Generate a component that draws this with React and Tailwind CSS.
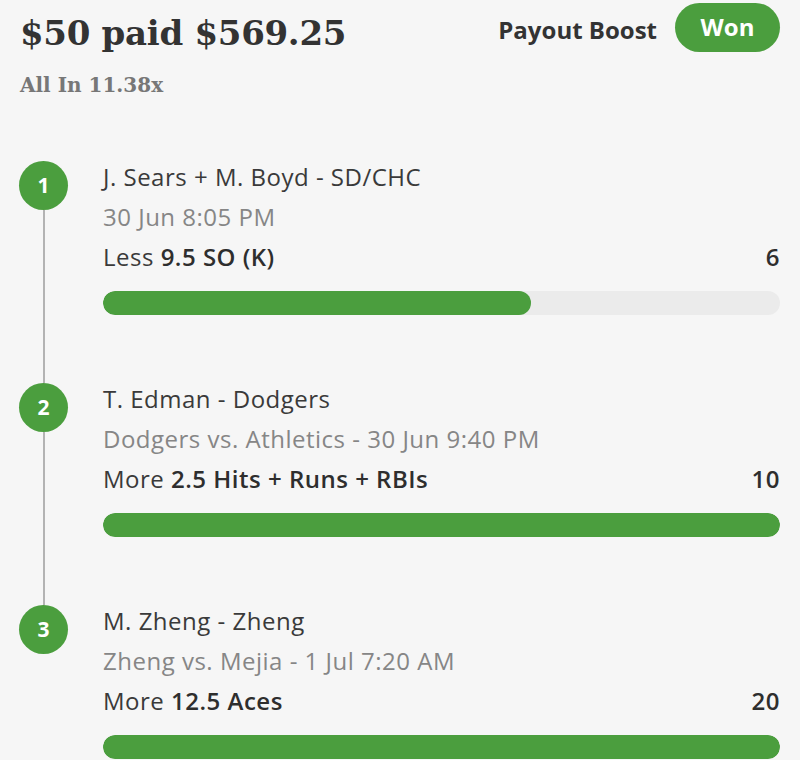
import React from "react";

const legs = [
  {
    n: 1,
    title: "J. Sears + M. Boyd - SD/CHC",
    sub: "30 Jun 8:05 PM",
    dir: "Less",
    line: "9.5 SO (K)",
    value: 6,
    pct: 63.2,
  },
  {
    n: 2,
    title: "T. Edman - Dodgers",
    sub: "Dodgers vs. Athletics - 30 Jun 9:40 PM",
    dir: "More",
    line: "2.5 Hits + Runs + RBIs",
    value: 10,
    pct: 100,
  },
  {
    n: 3,
    title: "M. Zheng - Zheng",
    sub: "Zheng vs. Mejia - 1 Jul 7:20 AM",
    dir: "More",
    line: "12.5 Aces",
    value: 20,
    pct: 100,
  },
];

function Leg({ leg, last }) {
  return (
    <div className={`flex ${last ? "" : "h-[222px]"}`}>
      <div className="w-[87px] flex flex-col items-center shrink-0">
        <div className="w-[49px] h-[49px] rounded-full bg-[#4b9e3e] text-white flex items-center justify-center text-[21px] font-bold shrink-0">
          {leg.n}
        </div>
        {!last && <div className="w-[2px] flex-1 bg-[#b3b3b3]" />}
      </div>
      <div className="flex-1 pl-[16px] pr-[20px] -mt-[4px] text-[24px] tracking-[0.5px] leading-[40px]">
        <div className="text-[#3a3a3a]">{leg.title}</div>
        <div className="text-[#868686]">{leg.sub}</div>
        <div className="flex justify-between text-[#3a3a3a]">
          <span>
            {leg.dir} <span className="font-semibold text-[#2e2e2e]">{leg.line}</span>
          </span>
          <span className="font-semibold text-[#2e2e2e]">{leg.value}</span>
        </div>
        <div className="mt-[14px] h-[24px] rounded-full bg-[#ebebeb] overflow-hidden">
          <div className="h-full rounded-full bg-[#4b9e3e]" style={{ width: `${leg.pct}%` }} />
        </div>
      </div>
    </div>
  );
}

export default function App() {
  return (
    <div
      className="w-[800px] h-[760px] bg-[#f6f6f6] overflow-hidden"
      style={{ fontFamily: "'Open Sans', 'Noto Sans', sans-serif" }}
    >
      <div className="flex justify-between items-start pl-[20px] pr-[20px] pt-[3px]">
        <div className="pt-[5px]">
          <div
            className="text-[34px] leading-[50px] font-bold text-[#333333] tracking-[-0.3px]"
            style={{ fontFamily: "'DejaVu Serif', serif" }}
          >
            $50 paid $569.25
          </div>
          <div
            className="mt-[13px] text-[20px] leading-[28px] font-bold text-[#777777]"
            style={{ fontFamily: "'DejaVu Serif', serif" }}
          >
            All In 11.38x
          </div>
        </div>
        <div className="flex items-center gap-[18px]">
          <span className="text-[24px] font-bold text-[#333333] mt-[5px]">Payout Boost</span>
          <span className="h-[49px] w-[105px] rounded-full bg-[#4b9e3e] text-white text-[24px] font-bold flex items-center justify-center pb-[2px]">
            Won
          </span>
        </div>
      </div>
      <div className="mt-[62px]">
        {legs.map((leg, i) => (
          <Leg key={leg.n} leg={leg} last={i === legs.length - 1} />
        ))}
      </div>
    </div>
  );
}
